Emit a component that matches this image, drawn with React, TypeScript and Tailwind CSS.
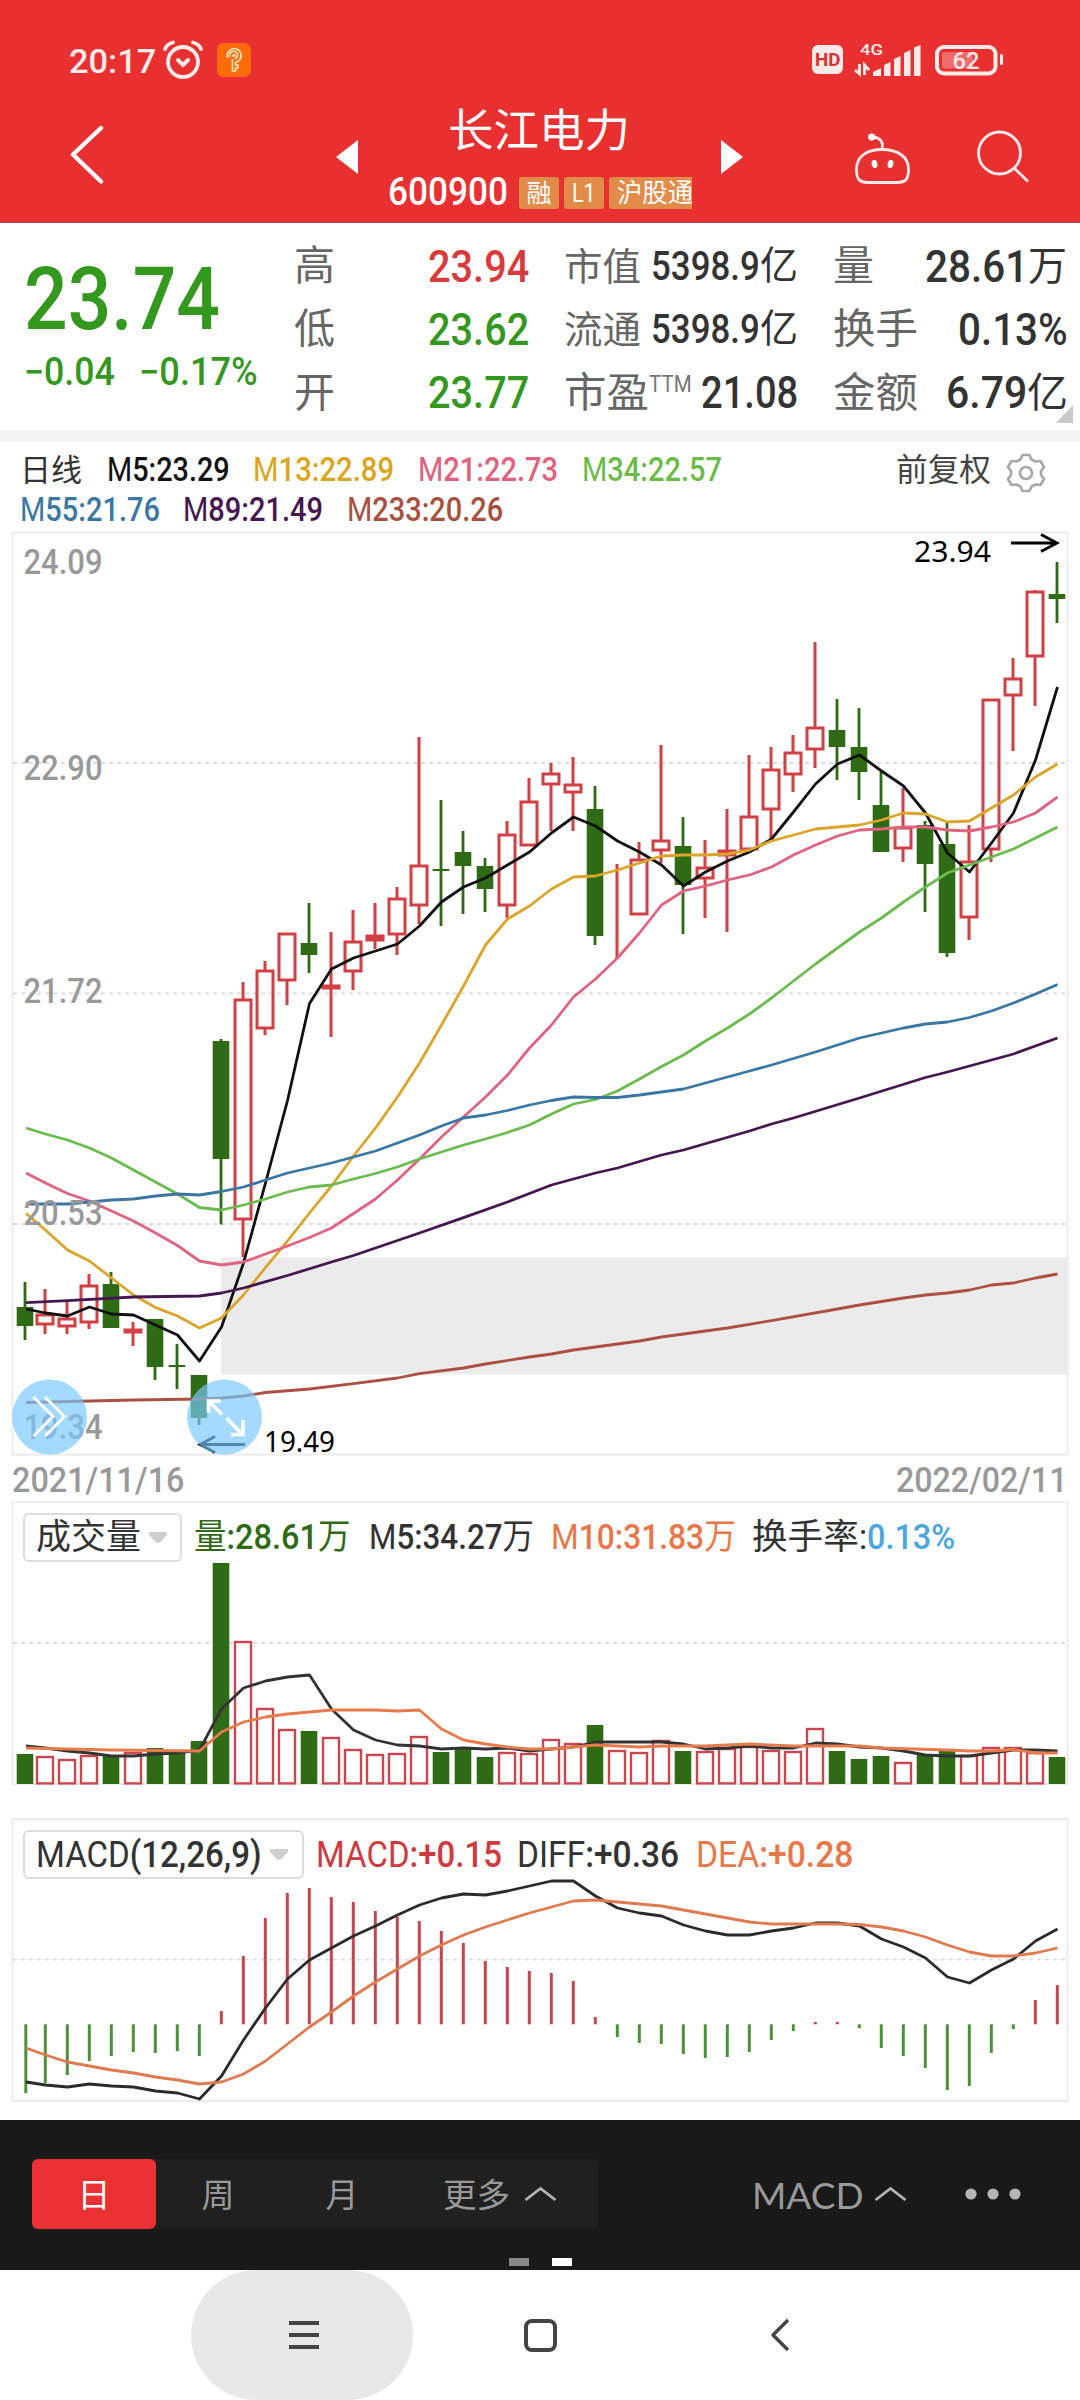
import React, { useLayoutEffect, useRef, useState } from 'react';

type Candle = [kind: 'u' | 'd', high: number, top: number, bottom: number, low: number];
type Point = [index: number, y: number];

// y values are in screen pixels, one entry per trading day
const candles: Candle[] = [
    ['d', 1282, 1307, 1326, 1340], ['u', 1289, 1315, 1324, 1334], ['u', 1302, 1319, 1326, 1334],
    ['u', 1274, 1286, 1322, 1329], ['d', 1272, 1284, 1328, 1328], ['u', 1322, 1330, 1332, 1346],
    ['d', 1319, 1319, 1367, 1380], ['d', 1344, 1365, 1367, 1389], ['d', 1375, 1375, 1418, 1425],
    ['d', 1039, 1041, 1159, 1224.5], ['u', 982, 1000, 1219, 1257], ['u', 961, 971, 1028, 1035],
    ['u', 934, 934, 980, 1005], ['d', 903, 943, 955, 973], ['u', 932, 986, 988, 1037],
    ['u', 910, 942, 971, 990], ['u', 903, 936, 940, 949], ['u', 887, 899, 934, 955],
    ['u', 737, 866, 905, 924], ['d', 800, 869, 871, 926], ['d', 831, 852, 866, 914],
    ['d', 858, 866, 889, 912], ['u', 821, 835, 905, 918], ['u', 778, 802, 845, 845],
    ['u', 763, 774, 784, 831], ['u', 757, 785, 792, 831], ['d', 786, 809, 936, 945],
    ['u', 864, 907, 907, 958], ['u', 842, 860, 914, 914], ['u', 745, 841, 850, 863],
    ['d', 817, 846, 885, 934], ['u', 840, 868, 878, 918], ['u', 809, 851, 855, 932],
    ['u', 755, 817, 849, 849], ['u', 747, 770, 809, 838], ['u', 735, 753, 774, 792],
    ['u', 642, 728, 749, 768], ['d', 699, 730, 747, 780], ['d', 708, 747, 772, 800],
    ['d', 772, 805, 852, 852], ['u', 788, 828, 848, 862], ['d', 821, 825, 864, 912],
    ['d', 823, 844, 953, 957], ['u', 825, 862, 917, 940], ['u', 700, 700, 849, 862],
    ['u', 658, 679, 695, 751], ['u', 590, 592, 656, 706], ['d', 562, 594, 599, 623],
];

const ma5 = [1309, 1313, 1316, 1307, 1314, 1315, 1325, 1335, 1361, 1327, 1263, 1183, 1100.5, 1003.5, 969, 958, 951, 944, 926, 902, 887, 878, 865, 852, 833, 817, 826, 841, 852, 865, 886, 872, 861, 852, 839, 812, 784, 764, 755, 771, 786, 813, 853, 872, 843, 813, 760, 687];
const ma13 = [1213.5, 1230, 1250, 1261, 1278, 1295, 1307.5, 1316, 1328, 1318, 1295, 1267.5, 1241, 1213, 1186, 1156, 1128, 1097, 1063, 1025, 986, 945, 919, 906, 889, 877, 876, 870, 863, 856, 855, 855, 854, 850, 841, 835, 829, 827, 825, 820, 813, 814, 822, 821, 808, 795, 777, 764];
const ma21 = [1173, 1183, 1193.5, 1201, 1211, 1221, 1233, 1245.5, 1261, 1265, 1262, 1254, 1246, 1237.5, 1228, 1213.5, 1199, 1180, 1159, 1137, 1117, 1097, 1075, 1048, 1025, 997, 979, 958, 933, 905, 891, 886, 880, 875, 867, 855, 845, 836, 830, 829, 827, 827, 830, 831, 827, 822, 813, 797];
const ma34 = [1128, 1134, 1140, 1148, 1158, 1170, 1182, 1194, 1207.5, 1210, 1205, 1199, 1192, 1187, 1185, 1179, 1173.5, 1167, 1159, 1152, 1145, 1139, 1132.5, 1125, 1114, 1104, 1099.5, 1091, 1079, 1066.5, 1055, 1041, 1028, 1014, 998, 981, 964, 948, 932, 918, 902, 887, 873, 865, 857, 849, 838, 827];
const ma55 = [1204, 1204, 1204, 1202, 1200, 1199, 1196, 1194, 1195, 1191.5, 1187, 1180, 1173, 1168, 1163, 1157, 1151, 1143, 1135, 1126, 1118, 1115, 1110.5, 1105, 1100.5, 1097, 1097.5, 1097.5, 1095, 1092, 1089, 1083, 1077, 1071, 1065, 1058.5, 1052, 1045, 1038, 1033, 1028, 1024, 1022, 1017.5, 1011, 1003, 994, 984.5];
const ma89: Point[] = [[0, 1302.7], [2, 1300.6], [5, 1297], [8, 1296], [9, 1293], [10, 1288], [12, 1275.5], [14, 1262], [15, 1255.5], [16, 1248], [18, 1233], [20, 1217.6], [22, 1202], [24, 1185], [25, 1179], [26, 1173], [27, 1168], [29, 1155], [30, 1150], [33, 1131], [34, 1124], [35, 1118], [38, 1098], [41, 1077.5], [42, 1072], [45, 1054], [47, 1038]];
const ma233: Point[] = [[0, 1402.5], [5, 1400], [8, 1399], [9, 1398], [10, 1396], [11, 1392.5], [13, 1389], [15, 1383.6], [17, 1378], [18, 1373.6], [20, 1368], [21, 1364], [23, 1357], [24, 1354], [25, 1350], [28, 1341], [29, 1337], [32, 1328], [34, 1320.6], [37, 1309], [38, 1305], [40, 1298], [41, 1295], [42, 1293], [43, 1290], [44, 1285], [45, 1283], [46, 1278], [47, 1274]];

const volumes = [1754, 1757, 1760, 1756, 1756, 1753, 1748, 1751, 1741, 1563, 1642, 1709, 1730, 1731, 1738, 1750, 1755, 1754, 1737, 1752, 1748, 1757, 1753, 1754, 1740, 1744, 1725, 1751, 1753, 1741, 1751, 1752, 1749, 1747, 1751, 1752, 1729, 1751, 1759, 1756, 1763, 1755, 1751, 1756, 1748, 1748, 1753, 1757];
const volMa5 = [1746, 1748, 1751, 1753, 1756, 1756, 1754, 1753, 1750, 1709, 1688, 1681, 1677, 1675, 1709, 1730, 1740, 1745, 1746, 1749, 1748, 1749, 1748, 1751, 1749, 1747, 1742, 1742, 1742, 1742, 1744, 1749, 1748, 1746, 1748, 1748, 1743, 1744, 1747, 1748, 1751, 1755, 1756, 1756, 1753, 1750, 1750, 1751];
const volMa10: Point[] = [[0, 1748], [1, 1748.5], [4, 1750], [8, 1751], [9, 1732], [10, 1722], [11, 1717], [12, 1714], [13, 1712], [14, 1710], [16, 1710], [17, 1711], [18, 1710], [19, 1729], [20, 1740], [21, 1744], [22, 1747], [23, 1749], [24, 1749], [25, 1747], [26, 1745], [28, 1747], [29, 1746], [31, 1746], [33, 1744], [35, 1746], [38, 1746], [39, 1748], [42, 1750], [43, 1751], [44, 1751], [45, 1749.5], [46, 1753], [47, 1753]];

const macdZero = 2024.3;
const macdBars = [2093, 2083, 2075, 2061, 2056, 2052, 2053, 2051, 2056, 2011, 1956, 1918, 1893, 1888, 1897, 1902, 1911, 1917, 1921, 1931, 1943, 1961, 1967, 1971, 1973, 1981, 2017, 2037, 2043, 2044, 2054, 2058, 2057, 2052, 2040, 2031, 2022, 2022, 2028, 2048, 2056, 2068, 2090, 2086, 2053, 2029, 2000, 1985];
const diff = [2082, 2085, 2087, 2084, 2086, 2087, 2091, 2093, 2099, 2076, 2040, 2008, 1979, 1960, 1948, 1936, 1926, 1915, 1905, 1898, 1894, 1895, 1891, 1886, 1881, 1881, 1896, 1908, 1913, 1916, 1925, 1931, 1935, 1935, 1931, 1928, 1923, 1923, 1926, 1939, 1947, 1958, 1977, 1983, 1970, 1959, 1941, 1929];
const dea = [2048, 2055, 2062, 2066, 2070, 2073, 2077, 2080, 2084, 2082, 2074, 2061, 2044, 2027, 2012, 1996, 1982, 1969, 1956, 1945, 1935, 1927, 1920, 1913, 1907, 1901, 1900, 1902, 1904, 1906, 1910, 1914, 1918, 1922, 1924, 1924, 1924, 1924, 1924.5, 1927, 1931, 1937, 1945, 1952, 1956, 1956, 1953, 1948];

const barX = (i: number) => (i === 0 ? 25 : 23 + i * 22);
const lineX = (i: number) => (i === 0 ? 26 : 23.5 + i * 22);

const Line = ({ data, color }: { data: (number | Point)[]; color: string }) => {
    const points = data.map((d, i) => (typeof d === 'number' ? `${lineX(i)},${d}` : `${lineX(d[0])},${d[1]}`)).join(' ');
    return <polyline points={points} fill="none" stroke={color} strokeWidth="2.8" strokeLinejoin="round" />;
};

const GridLine = ({ y }: { y: number }) => (
    <line x1="13" x2="1066" y1={y} y2={y} stroke="#dcdcdc" strokeWidth="1.8" strokeDasharray="4 4" />
);

// Squeezes a run of text to the width of its box
const Fit = ({ className, children }: { className: string; children: React.ReactNode }) => {
    const box = useRef<HTMLSpanElement>(null);
    const text = useRef<HTMLSpanElement>(null);
    const [scale, setScale] = useState(1);

    useLayoutEffect(() => {
        const update = () => {
            if (box.current && text.current && text.current.offsetWidth > 0) {
                setScale(box.current.offsetWidth / text.current.offsetWidth);
            }
        };
        update();
        const observer = new ResizeObserver(update);
        if (box.current) observer.observe(box.current);
        if (text.current) observer.observe(text.current);
        return () => observer.disconnect();
    }, []);

    return (
        <span ref={box} className={`flex shrink-0 whitespace-nowrap leading-none ${className}`}>
            <span ref={text} className="block shrink-0 origin-left" style={{ transform: `scaleX(${scale})` }}>{children}</span>
        </span>
    );
};

const StatusBar = () => (
    <div className="mt-[43px] flex h-[34px] items-center text-[#ffeaea]">
        <Fit className="ml-[69px] w-[87px] text-[34px] font-medium">20:17</Fit>
        <svg className="ml-[6px] h-[40px] w-[42px] overflow-visible" viewBox="0 1 42 40" fill="none" stroke="currentColor" strokeWidth="3.8" strokeLinecap="round">
            <circle cx="21" cy="22" r="15" />
            <path d="M3 9 Q5 4 11 2.5 M39 9 Q37 4 31 2.5" />
            <path d="M16 20 L21 25 L26 20" strokeWidth="4" />
        </svg>
        <svg className="ml-[13px] mb-[3px] h-[34px] w-[34px]" viewBox="0 0 34 34" fill="none">
            <rect width="34" height="34" rx="7" fill="#ff6a0a" />
            <path d="M10.5 15 A7 7 0 1 1 18.5 19.5 V22 H21 V25 H18.5 V28 H15.5 V16 M13 14 A4 4 0 1 1 18 16" stroke="#ffe3b8" strokeWidth="1.7" />
            <circle cx="17" cy="12.5" r="1.8" fill="#ffe3b8" />
        </svg>
        <div className="ml-[561px] mb-[3px] flex h-[29px] w-[31px] items-center justify-center rounded-[6px] bg-[#ffeaea] text-[#d93030]">
            <Fit className="w-[25px] text-[18px] font-bold">HD</Fit>
        </div>
        <svg className="ml-[10px] h-[40px] w-[70px] shrink-0 overflow-visible" viewBox="853 40 70 40" fill="none" stroke="currentColor">
            <text x="860" y="54" fontSize="15.5" fontWeight="500" textLength="23" lengthAdjust="spacingAndGlyphs" fill="currentColor" stroke="none">4G</text>
            <path d="M855 69 L859.5 73 V63 M864.5 74 V64 L869 69" strokeWidth="2.8" />
            <path d="M873 75 V71 L881 67 V75 Z M884 75 V64 L890.5 61 V75 Z M894 75 V58 L900.5 55 V75 Z M904 75 V52 L910.5 49 V75 Z M914 75 V46.5 L920.5 44 V75 Z" fill="currentColor" stroke="none" />
        </svg>
        <svg className="ml-[11px] mb-[2px] h-[34px] w-[72px]" viewBox="934 42 72 34" fill="none">
            <rect x="937" y="46" width="58.5" height="26.5" rx="7" stroke="currentColor" strokeWidth="4" />
            <rect x="942" y="51" width="31" height="16.500" rx="2" fill="#f26b6b" />
            <path d="M1001.500 54.500 V62.500" stroke="currentColor" strokeWidth="3" strokeLinecap="round" />
            <text x="952.5" y="68" fontSize="23" fontWeight="500" textLength="27" lengthAdjust="spacingAndGlyphs" fill="currentColor">62</text>
        </svg>
    </div>
);

const Header = () => (
    <header className="h-[223px] border-b border-[#b04a52] bg-[#e93030] pt-px text-white">
        <StatusBar />
        <div className="-mt-px flex h-[146px]">
            <svg className="ml-[68px] mt-[47px] h-[60px] w-[38px]" viewBox="68 124 38 60" fill="none" stroke="#fff" strokeWidth="4.4" strokeLinecap="round" strokeLinejoin="round">
                <path d="M101 128 L73 154.5 L101 181.5" />
            </svg>
            <svg className="ml-[230px] mt-[63px] h-[34px] w-[22px]" viewBox="0 0 22 34"><path d="M0 17 L22 0 V34 Z" fill="#fff" /></svg>
            <div className="ml-[30px] flex w-[304px] flex-col items-center">
                <Fit className="-ml-[3px] mt-[32px] w-[182px] text-[45px]">长江电力</Fit>
                <div className="mt-[14px] flex h-[50px] w-full items-center overflow-hidden">
                    <Fit className="mb-[2px] w-[120px] text-[39px] font-medium">600900</Fit>
                    <span className="ml-[11px] flex h-[32px] w-[40px] shrink-0 items-center justify-center rounded-[3px] bg-[#e38b49]"><Fit className="w-[25px] text-[25px]">融</Fit></span>
                    <span className="ml-[5px] flex h-[32px] w-[40px] shrink-0 items-center justify-center rounded-[3px] bg-[#e38b49]"><Fit className="w-[24px] text-[26px]">L1</Fit></span>
                    <span className="ml-[5px] flex h-[32px] w-[90px] shrink-0 items-center rounded-[3px] bg-[#e38b49] pl-[8px]"><Fit className="w-[76px] text-[26px]">沪股通</Fit></span>
                </div>
            </div>
            <svg className="ml-[29px] mt-[63px] h-[34px] w-[22px]" viewBox="0 0 22 34"><path d="M22 17 L0 0 V34 Z" fill="#fff" /></svg>
            <svg className="ml-[109px] mt-[54px] h-[56px] w-[60px]" viewBox="852 131 60 56" fill="none" stroke="#ffe9e9" strokeWidth="2.8">
                <path d="M882 149.500 C884 141 879 137 872 137" />
                <circle cx="871.700" cy="137" r="3.600" fill="#fff" stroke="none" />
                <path d="M882 149.500 C898 149.500 908.500 157 908.500 169 C908.500 179 906 182.500 897 182.500 H868 C859 182.500 856.500 179 856.500 169 C856.500 157 866 149.500 882 149.500 Z" />
                <ellipse cx="874.500" cy="164" rx="2.900" ry="4" fill="#fff" stroke="none" transform="rotate(-12 874.500 164)" />
                <ellipse cx="890.500" cy="164" rx="2.900" ry="4" fill="#fff" stroke="none" transform="rotate(12 890.500 164)" />
            </svg>
            <svg className="ml-[63px] mt-[52px] h-[56px] w-[56px]" viewBox="975 129 56 56" fill="none" stroke="#ffe9e9" strokeWidth="2.8">
                <circle cx="999.500" cy="153" r="21" />
                <path d="M1014 168 L1028 181.500" />
            </svg>
        </div>
    </header>
);

const QuotePanel = () => (
    <section className="relative flex h-[207px] bg-white pt-[12px] text-[#333]">
        <div className="ml-[24px] flex w-[271px] flex-col text-[#34981f]">
            <Fit className="mt-[21px] w-[196px] text-[87px] font-medium">23.74</Fit>
            <div className="mt-[10px] flex text-[38px]">
                <Fit className="w-[91px] font-medium">−0.04</Fit>
                <Fit className="ml-[24px] w-[119px] font-medium">−0.17%</Fit>
            </div>
        </div>
        <div className="-ml-px grid h-[190px] w-[235px] grid-rows-3 items-center">
            <div className="flex items-center justify-between"><Fit className="w-[41px] text-[41px] text-[#666]">高</Fit><Fit className="w-[101px] text-[44px] font-medium text-[#d93a3c]">23.94</Fit></div>
            <div className="flex items-center justify-between"><Fit className="w-[41px] text-[41px] text-[#666]">低</Fit><Fit className="w-[101px] text-[44px] font-medium text-[#34981f]">23.62</Fit></div>
            <div className="flex items-center justify-between"><Fit className="w-[41px] text-[41px] text-[#666]">开</Fit><Fit className="w-[101px] text-[44px] font-medium text-[#34981f]">23.77</Fit></div>
        </div>
        <div className="ml-[35px] grid h-[190px] w-[235px] grid-rows-3 items-center">
            <div className="flex items-center"><Fit className="w-[77px] text-[38px] text-[#666]">市值</Fit><Fit className="ml-[10px] w-[109px] text-[40px] font-medium">5398.9</Fit><Fit className="w-[38px] text-[39px]">亿</Fit></div>
            <div className="flex items-center"><Fit className="w-[77px] text-[38px] text-[#666]">流通</Fit><Fit className="ml-[10px] w-[109px] text-[40px] font-medium">5398.9</Fit><Fit className="w-[38px] text-[39px]">亿</Fit></div>
            <div className="flex items-center"><Fit className="w-[85px] text-[41px] text-[#666]">市盈</Fit><Fit className="mb-[18px] w-[43px] text-[23px] text-[#777]">TTM</Fit><Fit className="ml-[9px] w-[97px] text-[44px] font-medium">21.08</Fit></div>
        </div>
        <div className="ml-[34px] grid h-[190px] w-[235px] grid-rows-3 items-center">
            <div className="flex items-center justify-between"><Fit className="w-[41px] text-[41px] text-[#666]">量</Fit><div className="flex items-center pr-px"><Fit className="w-[103px] text-[44px] font-medium">28.61</Fit><Fit className="w-[39px] text-[40px]">万</Fit></div></div>
            <div className="flex items-center justify-between"><Fit className="w-[85px] text-[41px] text-[#666]">换手</Fit><Fit className="w-[110px] text-[44px] font-medium">0.13%</Fit></div>
            <div className="flex items-center justify-between"><Fit className="w-[85px] text-[41px] text-[#666]">金额</Fit><div className="flex items-center"><Fit className="w-[81px] text-[44px] font-medium">6.79</Fit><Fit className="w-[41px] text-[41px]">亿</Fit></div></div>
        </div>
        <svg className="absolute bottom-[7px] right-[7px] h-[18px] w-[17px]" viewBox="0 0 17 18"><path d="M17 0 V18 H0 Z" fill="#c9c9c9" /></svg>
    </section>
);

const Legend = () => (
    <div className="h-[82px] text-[34px]">
        <div className="flex h-[54px] items-center">
            <Fit className="ml-[20px] mt-[2px] w-[62px] text-[31px] text-[#333]">日线</Fit>
            <Fit className="ml-[25px] w-[123px] font-medium text-[#111]"><span className="font-normal">M</span>5:23.29</Fit>
            <Fit className="ml-[23px] w-[141px] font-medium text-[#dba520]"><span className="font-normal">M</span>13:22.89</Fit>
            <Fit className="ml-[24px] w-[140px] font-medium text-[#e0627e]"><span className="font-normal">M</span>21:22.73</Fit>
            <Fit className="ml-[24px] w-[140px] font-medium text-[#6cbb4a]"><span className="font-normal">M</span>34:22.57</Fit>
            <Fit className="ml-[174px] mt-[2px] w-[95px] text-[32px] text-[#444]">前复权</Fit>
            <svg className="ml-[15px] mt-[7px] h-[40px] w-[40px]" viewBox="0 0 40 40" fill="none" stroke="#a9a9a9" strokeWidth="2.700" strokeLinejoin="round">
                <path d="M16.500 2 H23.500 L25.500 6.500 L29.500 8.500 L34.500 8 L38 14 L35 18 V22 L38 26 L34.500 32 L29.500 31.500 L25.500 33.500 L23.500 38 H16.500 L14.500 33.500 L10.500 31.500 L5.500 32 L2 26 L5 22 V18 L2 14 L5.500 8 L10.500 8.500 L14.500 6.500 Z" />
                <circle cx="20" cy="20" r="6" />
            </svg>
        </div>
        <div className="flex h-[25px] items-center">
            <Fit className="ml-[20px] w-[140px] font-medium text-[#3a78a3]"><span className="font-normal">M</span>55:21.76</Fit>
            <Fit className="ml-[23px] w-[140px] font-medium text-[#451650]"><span className="font-normal">M</span>89:21.49</Fit>
            <Fit className="ml-[24px] w-[156px] font-medium text-[#a8503f]"><span className="font-normal">M</span>233:20.26</Fit>
        </div>
    </div>
);

const PriceChart = () => (
    <svg className="block h-[936px] w-[1080px]" viewBox="0 524 1080 936">
        <rect x="12.500" y="532.500" width="1055" height="922" fill="none" stroke="#ececec" strokeWidth="2" />
        <rect x="221" y="1257.500" width="846.500" height="117" fill="#ebebeb" />
        {[763, 993.5, 1224].map(y => <GridLine key={y} y={y} />)}
        {candles.map(([kind, high, top, bottom, low], i) => {
            const x = barX(i);
            if (kind === 'd') {
                return (
                    <g key={i} fill="#2f6a14">
                        <rect x={x - 1.4} y={high} width="2.8" height={low - high} />
                        <rect x={x - 8.3} y={top} width="16.6" height={bottom - top} />
                    </g>
                );
            }
            return (
                <g key={i} stroke="#d04044" strokeWidth="3" fill="none">
                    <path d={`M${x} ${high} V${top} M${x} ${bottom} V${low}`} />
                    <rect x={x - 8} y={top} width="16" height={bottom - top} fill={bottom - top < 5 ? '#e83a30' : 'none'} />
                </g>
            );
        })}
        <Line data={ma5} color="#111" />
        <Line data={ma13} color="#dba42a" />
        <Line data={ma21} color="#e06480" />
        <Line data={ma34} color="#6cbb4e" />
        <Line data={ma55} color="#3a78a3" />
        <Line data={ma89} color="#451650" />
        <Line data={ma233} color="#ab5042" />
        <g fill="#999" fontSize="35" fontWeight="500">
            {[['24.09', 574], ['22.90', 780], ['21.72', 1002.5], ['20.53', 1225], ['19.34', 1439]].map(([label, y]) => (
                <text key={label} x="23.500" y={y} textLength="79" lengthAdjust="spacingAndGlyphs">{label}</text>
            ))}
        </g>
        <g className="font-['Noto_Sans',sans-serif]" fill="#000" fontSize="29">
            <text x="914" y="562" textLength="77" lengthAdjust="spacingAndGlyphs">23.94</text>
            <text x="264" y="1452" textLength="71" lengthAdjust="spacingAndGlyphs">19.49</text>
        </g>
        <g fill="none" stroke="#000" strokeWidth="2.800">
            <path d="M1011 543 H1057 M1041 534.500 L1057 543 L1041 551.500" />
            <path d="M245 1444.500 H200 M215 1436.500 L200 1444.500 L215 1452.500" />
        </g>
        <circle cx="49.600" cy="1417" r="37.500" fill="#79c8fc" fillOpacity=".68" />
        <circle cx="224.500" cy="1417" r="37.500" fill="#79c8fc" fillOpacity=".68" />
        <g fill="none" stroke="#fff" strokeWidth="2.800">
            <path d="M33.500 1397 L53 1416.500 L33.500 1436 M45 1397 L64.500 1416.500 L45 1436" />
            <path d="M222 1414.500 L208.500 1401 M208.500 1412.500 V1401 H220.500 M226.500 1418 L242 1434 M243 1420 V1434.500 H231" strokeWidth="3.600" />
        </g>
    </svg>
);

const Picker = ({ className, children }: { className: string; children: React.ReactNode }) => (
    <div className={`flex h-[49px] items-center rounded-[6px] border-2 border-[#dcdcdc] bg-white text-[#333] ${className}`}>
        {children}
        <svg className="ml-[8px] h-[11px] w-[18px]" viewBox="0 0 18 11"><path d="M0 0 H18 V3 L11.500 10 Q9 12 6.500 10 L0 3 Z" fill="#cfcfcf" /></svg>
    </div>
);

const VolumeChart = () => (
    <div className="relative h-[317px]">
        <svg className="absolute inset-0 h-[317px] w-[1080px]" viewBox="0 1501 1080 317">
            <path d="M12.500 1784 V1501.800 H1067.500 V1784 Z" fill="none" stroke="#ececec" strokeWidth="2" />
            <GridLine y={1643} />
            {volumes.map((top, i) => (candles[i][0] === 'd'
                ? <rect key={i} x={barX(i) - 8.3} y={top} width="16.6" height={1784 - top} fill="#2f6a14" />
                : <rect key={i} x={barX(i) - 8} y={top} width="16" height={1783.4 - top} fill="#fff" stroke="#cb4750" strokeWidth="2.4" />
            ))}
            <Line data={volMa5} color="#333" />
            <Line data={volMa10} color="#e87b4c" />
        </svg>
        <div className="relative flex items-center pt-[12px] text-[35px]">
            <Picker className="ml-[23px] w-[159px]"><Fit className="ml-[11px] w-[105px] text-[35px]">成交量</Fit></Picker>
            <Fit className="ml-[12px] w-[157px] font-medium text-[#2f6a14]"><span className="font-normal">量</span>:28.61<span className="font-normal">万</span></Fit>
            <Fit className="ml-[18px] w-[165px] font-medium text-[#333]"><span className="font-normal">M</span>5:34.27<span className="font-normal">万</span></Fit>
            <Fit className="ml-[17px] w-[185px] font-medium text-[#e8774a]"><span className="font-normal">M</span>10:31.83<span className="font-normal">万</span></Fit>
            <Fit className="ml-[16px] w-[115px] text-[#333]">换手率:</Fit>
            <Fit className="w-[88px] font-medium text-[#4da6dd]">0.13%</Fit>
        </div>
    </div>
);

const MacdChart = () => (
    <div className="relative h-[302px]">
        <svg className="absolute inset-0 h-[302px] w-[1080px]" viewBox="0 1818 1080 302">
            <rect x="12.500" y="1819" width="1055" height="282" fill="none" stroke="#ececec" strokeWidth="2" />
            <GridLine y={1959.7} />
            {macdBars.map((y, i) => (
                <line key={i} x1={lineX(i) - 0.2} x2={lineX(i) - 0.2} y1={macdZero} y2={y} stroke={y < macdZero ? '#c5474d' : '#4d9138'} strokeWidth="3" />
            ))}
            <Line data={diff} color="#2b2b2b" />
            <Line data={dea} color="#e07a50" />
        </svg>
        <div className="relative flex items-center pt-[12px] text-[36px]">
            <Picker className="ml-[23px] w-[281px]"><Fit className="ml-[11px] w-[226px] font-medium"><span className="font-normal">MACD</span>(12,26,9)</Fit></Picker>
            <Fit className="ml-[12px] w-[186px] font-medium text-[#ce3a40]"><span className="font-normal">MACD</span>:+0.15</Fit>
            <Fit className="ml-[15px] w-[162px] font-medium text-[#333]"><span className="font-normal">DIFF</span>:+0.36</Fit>
            <Fit className="ml-[17px] w-[157px] font-medium text-[#e8774a]"><span className="font-normal">DEA</span>:+0.28</Fit>
        </div>
    </div>
);

const Caret = () => (
    <svg className="h-[16px] w-[33px]" viewBox="0 0 33 16" fill="none" stroke="#b5b5b5" strokeWidth="2.800"><path d="M1.500 14 L16.500 2.500 L31.500 14" /></svg>
);

const BottomBar = () => (
    <div className="relative h-[150px] bg-[#191919] pt-[39px] text-[33px] text-[#999]">
        <div className="flex h-[70px] items-center">
            <div className="ml-[32px] flex h-[70px] w-[566px] items-center rounded-[5px] bg-[#202020]">
                <div className="flex h-[70px] w-[124px] items-center justify-center rounded-[6px] bg-[#ea3133] text-white"><Fit className="mt-[2px] w-[33px]">日</Fit></div>
                <div className="flex w-[124px] justify-center"><Fit className="mt-[2px] w-[33px]">周</Fit></div>
                <div className="flex w-[124px] justify-center"><Fit className="mt-[2px] w-[33px]">月</Fit></div>
                <Fit className="ml-[39px] mt-[2px] w-[67px]">更多</Fit>
                <div className="ml-[14px]"><Caret /></div>
            </div>
            <Fit className="ml-[154px] w-[112px] font-['Lato',sans-serif] text-[37px]">MACD</Fit>
            <div className="ml-[10px]"><Caret /></div>
            <svg className="ml-[58px] h-[12px] w-[56px]" viewBox="0 0 56 12" fill="#b5b5b5">
                <circle cx="6" cy="6" r="5.600" />
                <circle cx="28" cy="6" r="5.600" />
                <circle cx="50" cy="6" r="5.600" />
            </svg>
        </div>
        <div className="mt-[29px] flex justify-center gap-[23px]">
            <span className="h-[8px] w-[20px] bg-[#888]" />
            <span className="h-[8px] w-[20px] bg-white" />
        </div>
    </div>
);

const SystemNav = () => (
    <nav className="flex h-[130px] items-center bg-white">
        <div className="ml-[191px] flex h-[130px] w-[222px] items-center justify-center rounded-[65px] bg-[#e8e8e8]">
            <svg className="ml-[4px] h-[32px] w-[32px]" viewBox="0 0 32 32" stroke="#444" strokeWidth="4"><path d="M1 4 H31 M1 16 H31 M1 28 H31" /></svg>
        </div>
        <div className="ml-[111px] h-[33px] w-[33px] rounded-[8px] border-4 border-[#444]" />
        <svg className="ml-[212px] h-[36px] w-[24px]" viewBox="0 0 24 36" fill="none" stroke="#444" strokeWidth="3.400" strokeLinejoin="round"><path d="M19 3 L4 18 L19 33" /></svg>
    </nav>
);

const App = () => (
    <div className="h-[2400px] w-[1080px] overflow-hidden bg-white font-['Roboto','Noto_Sans_CJK_SC',sans-serif]">
        <Header />
        <QuotePanel />
        <div className="h-[12px] bg-[#f4f4f4]" />
        <Legend />
        <PriceChart />
        <div className="flex h-[41px] items-center justify-between pl-[12px] pr-[13px] text-[35px] text-[#999]">
            <Fit className="w-[172px] font-medium">2021/11/16</Fit>
            <Fit className="w-[171px] font-medium">2022/02/11</Fit>
        </div>
        <VolumeChart />
        <MacdChart />
        <BottomBar />
        <SystemNav />
    </div>
);

export default App;
